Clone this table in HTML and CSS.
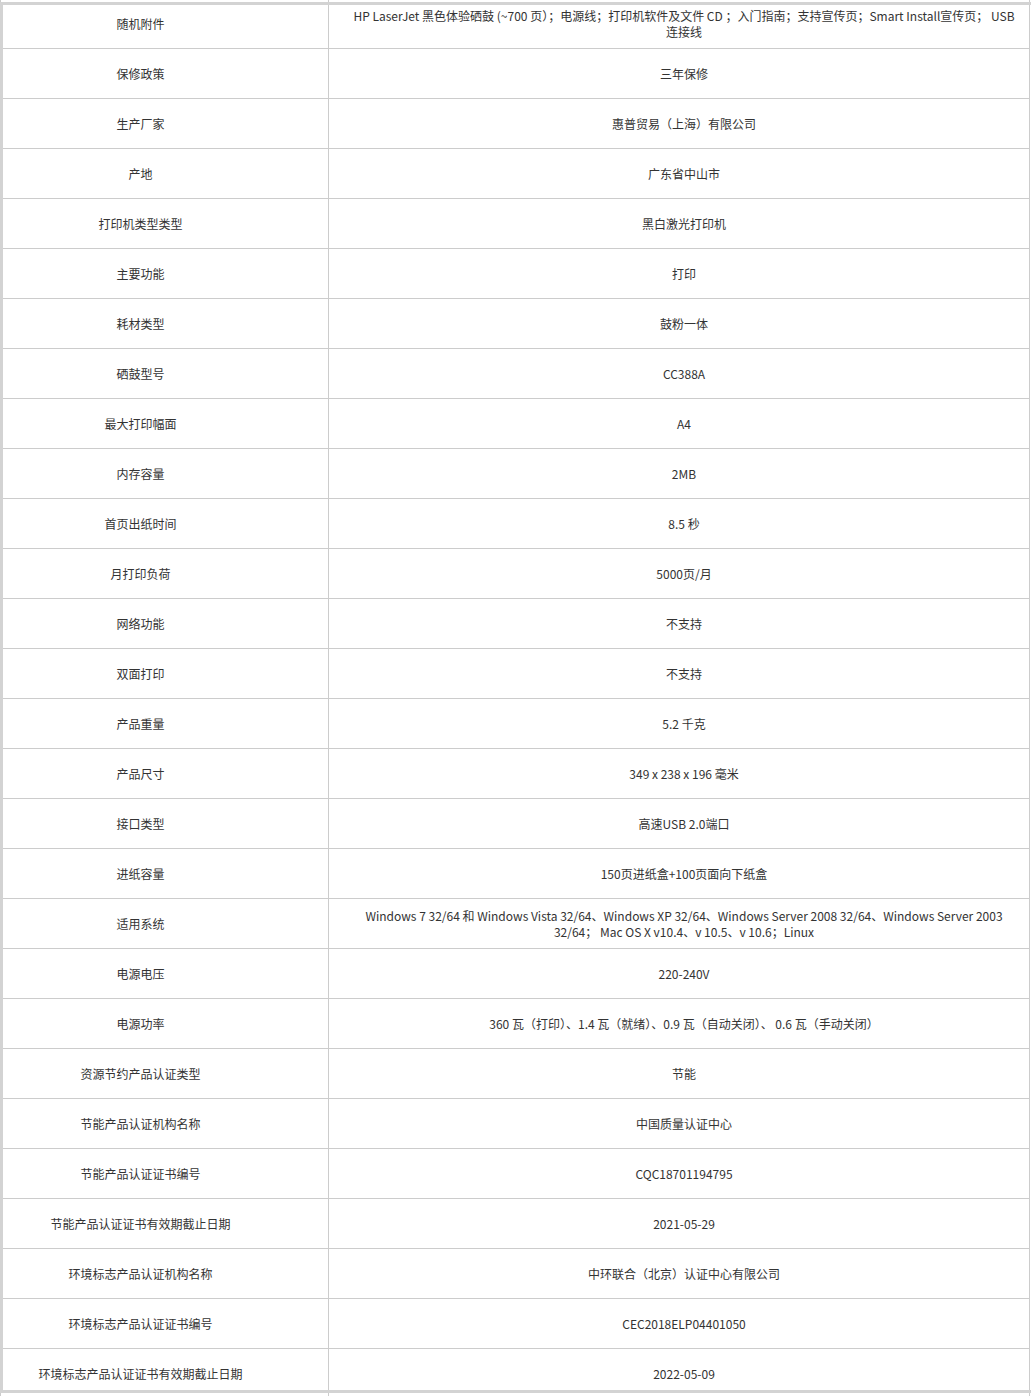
FILE: index.html
```html
<!DOCTYPE html>
<html lang="zh-CN">
<head>
<meta charset="utf-8">
<title>参数</title>
<link rel="stylesheet" href="styles.css">
</head>
<body>
<div class="viewport">
  <table class="specs">
    <colgroup><col class="col-key"><col class="col-val"></colgroup>
    <tbody>
      <tr><td class="k">随机附件</td><td class="v">HP LaserJet 黑色体验硒鼓 (~700 页）；电源线；打印机软件及文件 CD ；入门指南；支持宣传页；Smart Install宣传页； USB 连接线</td></tr>
      <tr><td class="k">保修政策</td><td class="v">三年保修</td></tr>
      <tr><td class="k">生产厂家</td><td class="v">惠普贸易（上海）有限公司</td></tr>
      <tr><td class="k">产地</td><td class="v">广东省中山市</td></tr>
      <tr><td class="k">打印机类型类型</td><td class="v">黑白激光打印机</td></tr>
      <tr><td class="k">主要功能</td><td class="v">打印</td></tr>
      <tr><td class="k">耗材类型</td><td class="v">鼓粉一体</td></tr>
      <tr><td class="k">硒鼓型号</td><td class="v">CC388A</td></tr>
      <tr><td class="k">最大打印幅面</td><td class="v">A4</td></tr>
      <tr><td class="k">内存容量</td><td class="v">2MB</td></tr>
      <tr><td class="k">首页出纸时间</td><td class="v">8.5 秒</td></tr>
      <tr><td class="k">月打印负荷</td><td class="v">5000页/月</td></tr>
      <tr><td class="k">网络功能</td><td class="v">不支持</td></tr>
      <tr><td class="k">双面打印</td><td class="v">不支持</td></tr>
      <tr><td class="k">产品重量</td><td class="v">5.2 千克</td></tr>
      <tr><td class="k">产品尺寸</td><td class="v">349 x 238 x 196 毫米</td></tr>
      <tr><td class="k">接口类型</td><td class="v">高速USB 2.0端口</td></tr>
      <tr><td class="k">进纸容量</td><td class="v">150页进纸盒+100页面向下纸盒</td></tr>
      <tr><td class="k">适用系统</td><td class="v">Windows 7 32/64 和 Windows Vista 32/64、Windows XP 32/64、Windows Server 2008 32/64、Windows Server 2003 32/64； Mac OS X v10.4、v 10.5、v 10.6；Linux</td></tr>
      <tr><td class="k">电源电压</td><td class="v">220-240V</td></tr>
      <tr><td class="k">电源功率</td><td class="v">360 瓦（打印）、1.4 瓦（就绪）、0.9 瓦（自动关闭）、 0.6 瓦（手动关闭）</td></tr>
      <tr><td class="k">资源节约产品认证类型</td><td class="v">节能</td></tr>
      <tr><td class="k">节能产品认证机构名称</td><td class="v">中国质量认证中心</td></tr>
      <tr><td class="k">节能产品认证证书编号</td><td class="v">CQC18701194795</td></tr>
      <tr><td class="k">节能产品认证证书有效期截止日期</td><td class="v">2021-05-29</td></tr>
      <tr><td class="k">环境标志产品认证机构名称</td><td class="v">中环联合（北京）认证中心有限公司</td></tr>
      <tr><td class="k">环境标志产品认证证书编号</td><td class="v">CEC2018ELP04401050</td></tr>
      <tr><td class="k">环境标志产品认证证书有效期截止日期</td><td class="v">2022-05-09</td></tr>
    </tbody>
  </table>
  <div class="frame"></div>
</div>
</body>
</html>
```

FILE: styles.css
```css
html, body {
  margin: 0;
  padding: 0;
  background: #ffffff;
}

.viewport {
  position: relative;
  width: 1031px;
  height: 1396px;
  overflow: hidden;
}

.specs {
  border-collapse: collapse;
  table-layout: fixed;
  width: 1030px;
  margin-top: -2px;
  font-family: "Noto Sans CJK SC", "Microsoft YaHei", sans-serif;
  font-size: 12px;
  line-height: 16px;
  color: #333333;
}

.col-key { width: 328px; }

.specs td {
  border: 1px solid #cccccc;
  height: 49px;
  box-sizing: border-box;
  padding: 0;
  text-align: center;
  vertical-align: middle;
}

.specs tr { height: 50px; }

.specs td.k {
  padding: 0 48px 0 0;
}

.specs td.v {
  padding: 0 11px 0 21px;
}

.frame {
  position: absolute;
  top: 2px;
  left: 0;
  width: 1031px;
  height: 1391px;
  box-sizing: border-box;
  border-top: 3px solid #d3d3d3;
  border-left: 3px solid #d3d3d3;
  border-bottom: 3px solid #d3d3d3;
  pointer-events: none;
}
```
